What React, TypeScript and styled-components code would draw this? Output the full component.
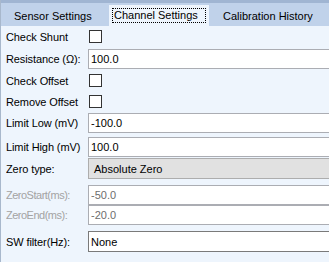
import React from 'react';
import styled, { createGlobalStyle } from 'styled-components'

const GlobalStyle = createGlobalStyle`
    html, body {
        margin: 0;
        padding: 0;
        overflow: hidden;
        background-color: #eef5fd;
    }
    body {
        font-family: "Liberation Sans", Arial, sans-serif;
        font-size: 11px;
    }
`

export default function App() {
    return (
        <Window>
            <GlobalStyle />
            <TabStrip>
                <Tab $width={108}>Sensor Settings</Tab>
                <ActiveTab>
                    <FocusBox>Channel Settings</FocusBox>
                </ActiveTab>
                <Tab $width={116} $pl={14}>Calibration History</Tab>
            </TabStrip>
            <Form>
                <Row $mt={4} $h={13}>
                    <Label>Check Shunt</Label>
                    <CheckBox />
                </Row>
                <Row $mt={6} $h={20}>
                    <Label>Resistance (Ω):</Label>
                    <TextBox readOnly value="100.0" />
                </Row>
                <Row $mt={5} $h={13}>
                    <Label>Check Offset</Label>
                    <CheckBox />
                </Row>
                <Row $mt={8} $h={13}>
                    <Label>Remove Offset</Label>
                    <CheckBox />
                </Row>
                <Row $mt={5} $h={20}>
                    <Label>Limit Low (mV)</Label>
                    <TextBox readOnly value="-100.0" />
                </Row>
                <Row $mt={4} $h={20}>
                    <Label>Limit High (mV)</Label>
                    <TextBox readOnly value="100.0" />
                </Row>
                <Row $mt={1} $h={21}>
                    <Label>Zero type:</Label>
                    <Combo>Absolute Zero</Combo>
                </Row>
                <Row $mt={6} $h={20}>
                    <Label $disabled>ZeroStart(ms):</Label>
                    <TextBox readOnly $disabled value="-50.0" />
                </Row>
                <Row $mt={0} $h={20}>
                    <Label $disabled>ZeroEnd(ms):</Label>
                    <TextBox readOnly $disabled value="-20.0" />
                </Row>
                <Row $mt={6} $h={21}>
                    <Label>SW filter(Hz):</Label>
                    <TextBox readOnly $dark value="None" />
                </Row>
            </Form>
        </Window>
    );
}

export const Window = styled.div`
    display: flex;
    flex-direction: column;
    width: 328px;
    height: 262px;
    overflow: hidden;
    border-left: 1px solid #a8b8cc;
    background-color: #eef5fd;
`

export const TabStrip = styled.div`
    display: flex;
    align-items: flex-start;
    height: 23px;
    border-top: 3px solid #a0b5d2;
    background-color: #c0d2ea;
`

export const Tab = styled.div<{ $width: number; $pl?: number }>`
    box-sizing: border-box;
    width: ${p => p.$width}px;
    height: 23px;
    padding: 6px 0 0 ${p => p.$pl ?? 13}px;
    color: #000;
    line-height: 14px;
    white-space: nowrap;
`

export const ActiveTab = styled.div`
    box-sizing: border-box;
    width: 100px;
    height: 21px;
    margin-top: 2px;
    padding: 3px 0 0 3px;
    background-color: #eef5fd;
`

export const FocusBox = styled.div`
    box-sizing: border-box;
    width: 94px;
    height: 15px;
    padding-left: 1px;
    border: 1px dotted #000;
    line-height: 13px;
    color: #000;
    white-space: nowrap;
`

export const Form = styled.div`
    display: flex;
    flex-direction: column;
    padding-left: 5px;
    overflow: hidden;
`

export const Row = styled.div<{ $mt: number; $h: number }>`
    display: flex;
    align-items: center;
    height: ${p => p.$h}px;
    margin-top: ${p => p.$mt}px;
    overflow: hidden;
`

export const Label = styled.div<{ $disabled?: boolean }>`
    width: 82px;
    flex-shrink: 0;
    color: ${p => (p.$disabled ? '#a3a3a3' : '#000')};
    letter-spacing: ${p => (p.$disabled ? '-0.5px' : '-0.1px')};
    white-space: nowrap;
`

export const CheckBox = styled.div`
    box-sizing: border-box;
    width: 13px;
    height: 13px;
    margin-left: 1px;
    border: 1px solid #333;
    background-color: #fff;
`

export const TextBox = styled.input<{ $disabled?: boolean; $dark?: boolean }>`
    box-sizing: border-box;
    flex-shrink: 0;
    width: 260px;
    height: 100%;
    margin: 0;
    padding: 0 0 0 2px;
    border: 1px solid ${p => (p.$dark ? '#7a7a7a' : '#abadb3')};
    border-radius: 0;
    outline: none;
    background-color: #fff;
    font-family: "Liberation Sans", Arial, sans-serif;
    font-size: 11px;
    color: ${p => (p.$disabled ? '#6d6d6d' : '#000')};
`

export const Combo = styled.div`
    box-sizing: border-box;
    display: flex;
    align-items: center;
    flex-shrink: 0;
    width: 260px;
    height: 100%;
    padding-left: 5px;
    border: 1px solid #adadad;
    background-color: #e1e1e1;
    color: #000;
`
